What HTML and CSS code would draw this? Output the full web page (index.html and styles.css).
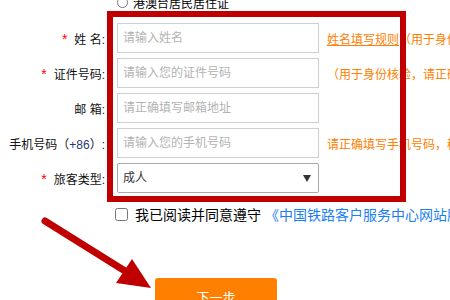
FILE: index.html
```html
<!DOCTYPE html>
<html lang="zh-CN">
<head>
  <meta charset="UTF-8" />
  <meta name="viewport" content="width=device-width, initial-scale=1.0"/>
  <title>乘车人信息</title>
  <link rel="stylesheet" href="styles.css">
</head>
<body>
  <div class="page">
    <div class="id-type">
      <input type="radio" class="radio" name="idtype">
      <span>港澳台居民居住证</span>
    </div>

    <form class="form" onsubmit="event.preventDefault();">
      <div class="row">
        <label class="label"><span class="req">*</span>姓 名:</label>
        <input type="text" class="field" placeholder="请输入姓名">
        <span class="hint"><a class="rule" href="#">姓名填写规则</a>（用于身份核验，请正确填写）</span>
      </div>
      <div class="row">
        <label class="label"><span class="req">*</span>证件号码:</label>
        <input type="text" class="field" placeholder="请输入您的证件号码">
        <span class="hint">（用于身份核验，请正确填写）</span>
      </div>
      <div class="row">
        <label class="label">邮 箱:</label>
        <input type="text" class="field" placeholder="请正确填写邮箱地址">
      </div>
      <div class="row">
        <label class="label">手机号码（<span class="code">+86</span>）:</label>
        <input type="text" class="field" placeholder="请输入您的手机号码">
        <span class="hint">请正确填写手机号码，稍后将向该手机号码发送短信验证码</span>
      </div>
      <div class="row">
        <label class="label"><span class="req">*</span>旅客类型:</label>
        <div class="select-wrap">
          <select class="field select">
            <option>成人</option>
            <option>儿童</option>
            <option>学生</option>
          </select>
          <span class="caret"></span>
        </div>
      </div>
    </form>

    <div class="agree">
      <input type="checkbox" class="check">
      <span>我已阅读并同意遵守 <a class="terms" href="#">《中国铁路客户服务中心网站服务条款》</a></span>
    </div>

    <div class="actions">
      <button type="button" class="next">下一步</button>
    </div>

    <!-- annotation drawn over the screenshot -->
    <div class="mark-box"></div>
    <svg class="mark-arrow" width="450" height="300" viewBox="0 0 450 300">
      <line x1="45" y1="221" x2="125" y2="271" stroke="#c00000" stroke-width="7" stroke-linecap="round"/>
      <polygon points="132,259 116,283 151,288" fill="#c00000"/>
    </svg>
  </div>
</body>
</html>
```

FILE: styles.css
```css
html, body {
  margin: 0;
  overflow: hidden;
  background: #fff;
}

body {
  font-family: "Liberation Sans", "Noto Sans CJK SC", sans-serif;
  font-size: 12px;
  color: #000;
}

.page {
  position: relative;
  width: 450px;
  height: 300px;
  overflow: hidden;
}

.id-type {
  display: flex;
  align-items: center;
  height: 20px;
  margin-top: -8px;
  margin-bottom: 11px;
  padding-left: 117px;
}

.radio {
  margin: 0 5px 0 0;
  width: 11px;
  height: 11px;
}

.form {
  display: flex;
  flex-direction: column;
  gap: 5px;
}

.row {
  display: flex;
  align-items: center;
  height: 30px;
  white-space: nowrap;
}

.label {
  width: 105px;
  margin-right: 12px;
  text-align: right;
  flex-shrink: 0;
  color: #111;
}

.req {
  color: #f00;
  font-size: 14px;
  margin-right: 7px;
}

.code {
  color: #1f3b73;
}

.field {
  box-sizing: border-box;
  width: 202px;
  height: 30px;
  border: 1px solid #cfcfcf;
  padding: 0 5px;
  font-family: inherit;
  font-size: 12px;
  color: #333;
  outline: none;
  flex-shrink: 0;
}

.field::placeholder {
  color: #b3b3b3;
}

.hint {
  margin-left: 8px;
  color: #ff8000;
}

.rule {
  color: #ff8000;
  text-decoration: underline;
}

.select-wrap {
  position: relative;
  width: 202px;
  height: 30px;
}

.select {
  appearance: none;
  -webkit-appearance: none;
  background: #fff;
  border-color: #a9a9a9;
  border-radius: 2px;
}

.caret {
  position: absolute;
  right: 8px;
  top: 12px;
  width: 0;
  height: 0;
  border-left: 4px solid transparent;
  border-right: 4px solid transparent;
  border-top: 7px solid #333;
}

.agree {
  display: flex;
  align-items: center;
  height: 20px;
  margin-top: 11px;
  padding-left: 115px;
  font-size: 14px;
  white-space: nowrap;
}

.check {
  margin: 0 7px 0 0;
  width: 13px;
  height: 13px;
}

.terms {
  color: #1a80f0;
  text-decoration: none;
}

.actions {
  margin-top: 54px;
  padding-left: 155px;
}

.next {
  width: 122px;
  height: 36px;
  border: none;
  border-radius: 3px;
  background: #ff8000;
  color: #fff;
  font-family: inherit;
  font-size: 13px;
  cursor: pointer;
}

.mark-box {
  position: absolute;
  left: 107px;
  top: 11px;
  width: 287px;
  height: 179px;
  border: 6px solid #c00000;
  pointer-events: none;
}

.mark-arrow {
  position: absolute;
  left: 0;
  top: 0;
  pointer-events: none;
}
```
